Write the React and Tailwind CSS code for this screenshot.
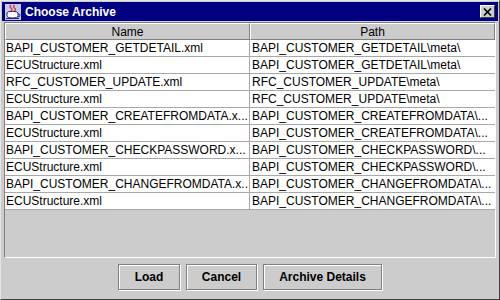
import React from 'react';

const rows = [
  ['BAPI_CUSTOMER_GETDETAIL.xml', 'BAPI_CUSTOMER_GETDETAIL\\meta\\'],
  ['ECUStructure.xml', 'BAPI_CUSTOMER_GETDETAIL\\meta\\'],
  ['RFC_CUSTOMER_UPDATE.xml', 'RFC_CUSTOMER_UPDATE\\meta\\'],
  ['ECUStructure.xml', 'RFC_CUSTOMER_UPDATE\\meta\\'],
  ['BAPI_CUSTOMER_CREATEFROMDATA.x...', 'BAPI_CUSTOMER_CREATEFROMDATA\\...'],
  ['ECUStructure.xml', 'BAPI_CUSTOMER_CREATEFROMDATA\\...'],
  ['BAPI_CUSTOMER_CHECKPASSWORD.x...', 'BAPI_CUSTOMER_CHECKPASSWORD\\...'],
  ['ECUStructure.xml', 'BAPI_CUSTOMER_CHECKPASSWORD\\...'],
  ['BAPI_CUSTOMER_CHANGEFROMDATA.x...', 'BAPI_CUSTOMER_CHANGEFROMDATA\\...'],
  ['ECUStructure.xml', 'BAPI_CUSTOMER_CHANGEFROMDATA\\...'],
];

const CupIcon = () => (
  <svg width="16" height="16" viewBox="0 0 16 16">
    <rect x="0" y="0" width="16" height="16" fill="#c8c8e8" />
    <path d="M6 1 q-2 1.5 0 3 q2 1.5 0 3" fill="none" stroke="#e03030" strokeWidth="1.3" />
    <path d="M9.5 1 q-2 1.5 0 3 q2 1.5 0 3" fill="none" stroke="#e03030" strokeWidth="1.3" />
    <ellipse cx="7.5" cy="9" rx="5.5" ry="1.6" fill="#ffffff" stroke="#202080" strokeWidth="1" />
    <path d="M2 9 v2.5 q0 2.5 5.5 2.5 q5.5 0 5.5 -2.5 V9" fill="#ffffff" stroke="#202080" strokeWidth="1" />
    <path d="M13 10 q2.5 0 2 1.8 q-0.5 1.2 -2.5 1" fill="none" stroke="#202080" strokeWidth="1" />
    <path d="M1 14.5 h13" stroke="#202080" strokeWidth="1" />
  </svg>
);

const Button = ({ children, w }) => (
  <button
    className={`h-[26px] ${w} border border-[#808080] bg-[#cccccc] text-[12px] font-bold text-black shadow-[inset_1px_1px_0_#ffffff,1px_1px_0_#ffffff]`}
  >
    {children}
  </button>
);

export default function App() {
  return (
    <div
      className="w-[500px] h-[300px] bg-[#cccccc] border border-t-[#e6e6e6] border-l-[#e6e6e6] border-r-[#404040] border-b-[#404040] p-px flex flex-col"
      style={{ fontFamily: '"Liberation Sans", Arial, sans-serif' }}
    >
      <div className="h-[19px] bg-[#000080] flex items-center pl-[3px] pr-[3px]">
        <CupIcon />
        <span className="ml-[4px] text-white text-[12px] font-bold">Choose Archive</span>
        <div className="ml-auto w-[15px] h-[13px] bg-[#cccccc] border border-t-white border-l-white border-r-[#404040] border-b-[#404040] flex items-center justify-center">
          <svg width="9" height="8" viewBox="0 0 9 8">
            <path d="M1 0.5 L8 7.5 M8 0.5 L1 7.5" stroke="#000" strokeWidth="1.6" />
          </svg>
        </div>
      </div>

      <div className="mt-px mx-[2px] h-[236px] border border-t-[#808080] border-l-[#808080] border-r-white border-b-white flex flex-col">
        <div className="flex h-[17px] text-[12px] text-black">
          <div className="w-[245px] border border-t-white border-l-white border-r-[#808080] border-b-[#808080] flex items-center justify-center">
            Name
          </div>
          <div className="flex-1 border border-t-white border-l-white border-r-[#808080] border-b-[#808080] flex items-center justify-center">
            Path
          </div>
        </div>
        {rows.map(([name, path], i) => (
          <div key={i} className="flex h-[17px] bg-white border-b border-[#a8a8a8] text-[12px] text-black leading-[16px]">
            <div className="w-[245px] border-r border-[#a8a8a8] pl-[1px] whitespace-nowrap overflow-hidden">{name}</div>
            <div className="flex-1 pl-[2px] whitespace-nowrap overflow-hidden">{path}</div>
          </div>
        ))}
      </div>

      <div className="flex-1 flex items-start justify-center gap-[6px] pt-[6px]">
        <Button w="w-[62px]">Load</Button>
        <Button w="w-[71px]">Cancel</Button>
        <Button w="w-[119px]">Archive Details</Button>
      </div>
    </div>
  );
}
